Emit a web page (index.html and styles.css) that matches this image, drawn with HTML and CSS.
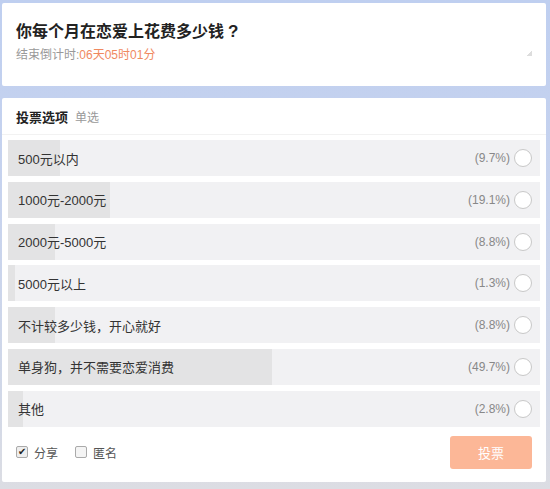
FILE: index.html
```html
<!DOCTYPE html>
<html lang="zh-CN">
<head>
  <meta charset="UTF-8">
  <title>投票</title>
  <link rel="stylesheet" href="styles.css">
</head>
<body>
  <!-- Question card -->
  <div class="card topic">
    <h1 class="title">你每个月在恋爱上花费多少钱<span class="qmark">?</span></h1>
    <div class="countdown">结束倒计时:<span class="remain">06天05时01分</span></div>
    <span class="grip"></span>
  </div>

  <!-- Options card -->
  <div class="card vote">
    <div class="vote-head">
      <b>投票选项</b><span class="mode">单选</span>
    </div>
    <div class="options">
      <div class="option"><div class="fill" style="width:9.7%"></div><span class="label">500元以内</span><span class="pct">(9.7%)</span><span class="radio"></span></div>
      <div class="option"><div class="fill" style="width:19.1%"></div><span class="label">1000元-2000元</span><span class="pct">(19.1%)</span><span class="radio"></span></div>
      <div class="option"><div class="fill" style="width:8.8%"></div><span class="label">2000元-5000元</span><span class="pct">(8.8%)</span><span class="radio"></span></div>
      <div class="option"><div class="fill" style="width:1.3%"></div><span class="label">5000元以上</span><span class="pct">(1.3%)</span><span class="radio"></span></div>
      <div class="option"><div class="fill" style="width:8.8%"></div><span class="label">不计较多少钱，开心就好</span><span class="pct">(8.8%)</span><span class="radio"></span></div>
      <div class="option"><div class="fill" style="width:49.7%"></div><span class="label">单身狗，并不需要恋爱消费</span><span class="pct">(49.7%)</span><span class="radio"></span></div>
      <div class="option"><div class="fill" style="width:2.8%"></div><span class="label">其他</span><span class="pct">(2.8%)</span><span class="radio"></span></div>
    </div>
    <div class="vote-foot">
      <label class="check"><span class="box checked">&#10004;</span>分享</label>
      <label class="check"><span class="box"></span>匿名</label>
      <button class="submit">投票</button>
    </div>
  </div>
</body>
</html>
```

FILE: styles.css
```css
/* Basic styling */
body {
  margin: 0;
  padding: 3px 4px 0 2px;
  height: 489px;
  box-sizing: border-box;
  font-family: "Liberation Sans", "Noto Sans CJK SC", sans-serif;
  color: #333;
  background: linear-gradient(180deg, #bfcff0 0%, #c7d3ee 40%, #d1d8e8 80%, #dcdde3 100%);
  overflow: hidden;
}
.card {
  background: #fff;
  border-radius: 2px;
}
/* Question */
.topic {
  position: relative;
  height: 83px;
  padding: 18px 14px 0 14px;
  box-sizing: border-box;
}
.title {
  margin: 0;
  font-size: 16px;
  font-weight: bold;
  color: #222;
  line-height: 22px;
}
.qmark {
  margin-left: 4px;
  font-size: 17px;
}
.countdown {
  margin-top: 2px;
  font-size: 12px;
  color: #999;
}
.remain {
  color: #f0895f;
}
.grip {
  position: absolute;
  right: 14px;
  top: 48px;
  width: 5px;
  height: 5px;
  background: linear-gradient(135deg, transparent 50%, #ddd 50%);
}
/* Options */
.vote {
  margin-top: 12px;
  height: 384px;
  display: flex;
  flex-direction: column;
}
.vote-head {
  height: 36px;
  padding: 0 14px;
  display: flex;
  align-items: center;
  border-bottom: 1px solid #f2f2f2;
  font-size: 13px;
}
.vote-head b {
  color: #222;
}
.mode {
  margin-left: 7px;
  color: #999;
  font-size: 12px;
}
.options {
  padding: 5px 6px 0 6px;
  display: flex;
  flex-direction: column;
  gap: 5.8px;
}
.option {
  position: relative;
  height: 36px;
  background: #f1f1f3;
  display: flex;
  align-items: center;
  font-size: 13px;
}
.fill {
  position: absolute;
  left: 0;
  top: 0;
  bottom: 0;
  background: #e3e3e4;
}
.label {
  position: relative;
  flex: 1;
  padding-left: 10px;
  color: #333;
}
.pct {
  position: relative;
  color: #888;
  font-size: 12px;
  margin-right: 4px;
}
.radio {
  position: relative;
  width: 16px;
  height: 16px;
  border: 1px solid #c8c8c8;
  border-radius: 50%;
  background: #fff;
  margin-right: 8px;
}
/* Footer */
.vote-foot {
  flex: 1;
  display: flex;
  align-items: center;
  padding: 0 14px 4px 14px;
  font-size: 12px;
  color: #555;
}
.check {
  display: flex;
  align-items: center;
  margin-right: 17px;
}
.box {
  width: 10px;
  height: 10px;
  border: 1px solid #aaa;
  border-radius: 2px;
  background: #f4f4f4;
  margin-right: 6px;
  font-size: 10px;
  line-height: 10px;
  text-align: center;
  color: #222;
}
.box.checked {
  background: #eee;
}
.submit {
  margin-left: auto;
  width: 82px;
  height: 33px;
  border: none;
  border-radius: 3px;
  background: #fcb797;
  color: #fff;
  font-family: inherit;
  font-size: 13px;
}
```
